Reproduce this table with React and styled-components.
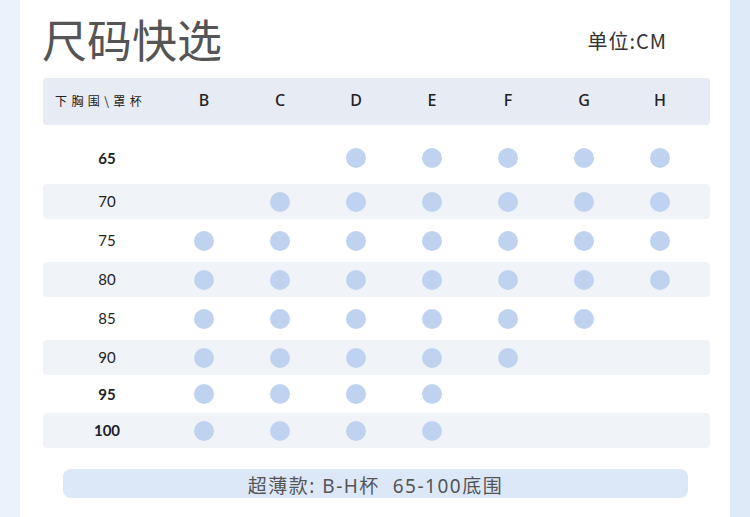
import React from "react";
import styled, { createGlobalStyle } from "styled-components";

const cups = ["B", "C", "D", "E", "F", "G", "H"];

const rows = [
  { band: "65", from: 2, to: 6, bold: true, h: 44, pb: 8 },
  { band: "70", from: 1, to: 6, striped: true, h: 35 },
  { band: "75", from: 0, to: 6, h: 43 },
  { band: "80", from: 0, to: 6, striped: true, h: 35 },
  { band: "85", from: 0, to: 5, h: 43 },
  { band: "90", from: 0, to: 4, striped: true, h: 35 },
  { band: "95", from: 0, to: 3, bold: true, h: 38 },
  { band: "100", from: 0, to: 3, bold: true, striped: true, h: 35 },
];

const App = () => {
  return (
    <>
      <GlobalStyle />
      <Page>
        <Panel>
          <TitleRow>
            <Title>尺码快选</Title>
            <Unit>单位:CM</Unit>
          </TitleRow>

          {/* size table */}
          <Table>
            <HeadRow>
              <HeadLabel>下胸围\罩杯</HeadLabel>
              {cups.map((c) => (
                <Cup key={c}>{c}</Cup>
              ))}
            </HeadRow>
            <Body>
              {rows.map((r) => (
                <Row key={r.band} $striped={r.striped} $h={r.h} $pb={r.pb}>
                  <Band $bold={r.bold}>{r.band}</Band>
                  {cups.map((c, i) => (
                    <Cell key={c}>{i >= r.from && i <= r.to && <Dot />}</Cell>
                  ))}
                </Row>
              ))}
            </Body>
          </Table>

          <Note>超薄款: B-H杯&nbsp;&nbsp;65-100底围</Note>
        </Panel>
      </Page>
    </>
  );
};

export default App;

const GlobalStyle = createGlobalStyle`
  html, body {
    margin: 0;
    padding: 0;
    height: 100%;
    overflow: hidden;
  }
  body {
    font-family: "Noto Sans", "Noto Sans CJK SC", sans-serif;
    background: linear-gradient(to right, #ebf2fb, #dfeaf8);
  }
`;

const Page = styled.div`
  height: 517px;
  padding: 0 20px;
`;

const Panel = styled.div`
  background: #fff;
  height: 100%;
  display: flex;
  flex-direction: column;
`;

const TitleRow = styled.div`
  display: flex;
  align-items: flex-end;
  justify-content: space-between;
  padding: 16px 63px 0 22px;
  height: 45px;
`;

const Title = styled.h1`
  margin: 0;
  font-family: "Noto Sans CJK SC", sans-serif;
  font-weight: 400;
  font-size: 45px;
  line-height: 45px;
  color: #555;
`;

const Unit = styled.div`
  font-family: "Noto Sans CJK SC", sans-serif;
  font-size: 20px;
  line-height: 20px;
  letter-spacing: 1px;
  color: #333;
  margin-bottom: 10px;
`;

const Table = styled.div`
  margin: 17px 20px 0 23px;
`;

const grid = `
  display: grid;
  grid-template-columns: 123px repeat(7, 76px);
  align-items: center;
`;

const HeadRow = styled.div`
  ${grid}
  height: 47px;
  background: #e6ebf4;
  border-radius: 4px;
`;

const HeadLabel = styled.div`
  padding-left: 12px;
  font-family: "Noto Sans CJK SC", sans-serif;
  font-size: 12px;
  letter-spacing: 4.4px;
  color: #222;
  white-space: nowrap;
  margin-top: -2px;
`;

const Cup = styled.div`
  text-align: center;
  font-family: "Noto Sans", sans-serif;
  font-weight: 500;
  font-size: 16px;
  color: #222;
  margin-top: -3px;
`;

const Body = styled.div`
  padding-top: 15px;
  display: flex;
  flex-direction: column;
`;

const Row = styled.div`
  ${grid}
  height: ${(p) => p.$h}px;
  padding-bottom: ${(p) => p.$pb || 0}px;
  box-sizing: border-box;
  background: ${(p) => (p.$striped ? "#f0f4f9" : "transparent")};
  border-radius: 4px;
`;

const Band = styled.div`
  text-align: center;
  padding-left: 5px;
  font-family: Lato, sans-serif;
  font-size: 15px;
  font-weight: ${(p) => (p.$bold ? 700 : 400)};
  color: #222;
  margin-top: -1px;
`;

const Cell = styled.div`
  display: flex;
  justify-content: center;
`;

const Dot = styled.span`
  width: 20px;
  height: 20px;
  border-radius: 50%;
  background: #bfd3f0;
`;

const Note = styled.div`
  margin: 21px 42px 0 43px;
  height: 29px;
  border-radius: 8px;
  background: #dce8f8;
  display: flex;
  align-items: center;
  justify-content: center;
  padding-top: 2px;
  box-sizing: border-box;
  font-family: "Noto Sans", "Noto Sans CJK SC", sans-serif;
  font-size: 19px;
  letter-spacing: 1.5px;
  color: #555;
`;
